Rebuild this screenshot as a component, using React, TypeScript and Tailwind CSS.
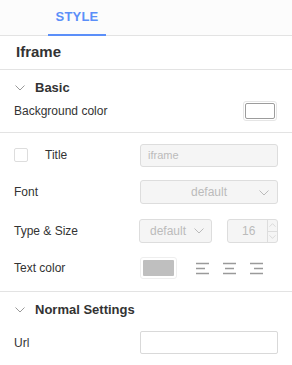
import React from "react";

function Chevron({ className = "" }: { className?: string }) {
  return (
    <svg width="10" height="6" viewBox="0 0 10 6" className={className}>
      <path d="M0.5 0.5 L5 5 L9.5 0.5" fill="none" stroke="currentColor" strokeWidth="1" />
    </svg>
  );
}

function AlignIcon({ kind }: { kind: "left" | "center" | "right" }) {
  const mid = kind === "left" ? "M1 6.5h9" : kind === "center" ? "M3 6.5h9" : "M5 6.5h9";
  return (
    <svg width="15" height="13" viewBox="0 0 15 13" className="text-[#9a9a9a]">
      <path d={`M1 1.5h13 ${mid} M1 11.5h13`} stroke="currentColor" strokeWidth="1.4" fill="none" />
    </svg>
  );
}

function Row({ label, children, className = "" }: { label: React.ReactNode; children: React.ReactNode; className?: string }) {
  return (
    <div className={`flex items-center justify-between ${className}`}>
      <div className="text-[12px] text-[#333]">{label}</div>
      {children}
    </div>
  );
}

export default function App() {
  return (
    <div className="w-[292px] h-[365px] bg-white overflow-hidden font-['Liberation_Sans',Arial,sans-serif] text-[#333]">
      {/* tabs */}
      <div className="h-[36px] bg-[#fcfcfc] border-b border-[#e3e3e3] relative">
        <div className="absolute left-[48px] w-[58px] top-0 h-[36px] flex items-center justify-center border-b-2 border-[#5b8ff9]">
          <span className="text-[13px] font-bold text-[#5b8ff9] tracking-[0.2px]">STYLE</span>
        </div>
      </div>

      <div className="h-[34px] border-b border-[#e3e3e3] flex items-center px-[16px]">
        <span className="text-[15px] font-bold text-[#333]">Iframe</span>
      </div>

      {/* Basic */}
      <div className="border-b border-[#e3e3e3] px-[14px] pt-[10px] pb-[10px]">
        <div className="flex items-center h-[16px]">
          <Chevron className="text-[#999] ml-[1px]" />
          <span className="ml-[10px] text-[13px] font-bold text-[#333]">Basic</span>
        </div>
        <Row label="Background color" className="mt-[3px] h-[23px]">
          <div className="w-[34px] h-[20px] rounded-[3px] border border-[#e5e5e5] p-[1px] mr-[1px]">
            <div className="w-full h-full border border-[#9c9c9c] rounded-[2px] bg-white" />
          </div>
        </Row>
      </div>

      <div className="px-[14px] pt-[10px]">
        <div className="flex items-center justify-between h-[24px]">
          <div className="flex items-center">
            <div className="w-[14px] h-[14px] border border-[#ddd] rounded-[2px] bg-white" />
            <span className="ml-[17px] text-[12px] text-[#333]">Title</span>
          </div>
          <div className="w-[138px] h-[23px] border border-[#ddd] rounded-[3px] bg-[#f5f5f5] flex items-center px-[7px] text-[11px] text-[#bbb]">
            iframe
          </div>
        </div>

        <Row label="Font" className="mt-[13px] h-[24px]">
          <div className="w-[138px] h-[24px] border border-[#ddd] rounded-[3px] bg-[#f5f5f5] relative flex items-center justify-center text-[12px] text-[#bbb]">
            default
            <Chevron className="absolute right-[8px] top-[9px] text-[#bbb]" />
          </div>
        </Row>

        <Row label="Type & Size" className="mt-[15px] h-[24px]">
          <div className="flex items-center">
            <div className="w-[73px] h-[24px] border border-[#ddd] rounded-[3px] bg-[#f5f5f5] relative flex items-center pl-[10px] text-[12px] text-[#bbb]">
              default
              <Chevron className="absolute right-[7px] top-[8px] text-[#bbb]" />
            </div>
            <div className="ml-[15px] w-[51px] h-[24px] border border-[#ddd] rounded-[3px] bg-[#f5f5f5] relative flex items-center text-[12px] text-[#bbb]">
              <span className="ml-[14px]">16</span>
              <div className="absolute right-0 top-0 w-[10px] h-full border-l border-[#ddd] flex flex-col">
                <div className="flex-1 flex items-center justify-center border-b border-[#ddd]">
                  <Chevron className="w-[7px] h-[4px] rotate-180 text-[#ccc]" />
                </div>
                <div className="flex-1 flex items-center justify-center">
                  <Chevron className="w-[7px] h-[4px] text-[#ccc]" />
                </div>
              </div>
            </div>
          </div>
        </Row>

        <Row label="Text color" className="mt-[14px] h-[22px]">
          <div className="w-[138px] flex items-center">
            <div className="w-[37px] h-[22px] border border-[#eee] rounded-[3px] p-[2px]">
              <div className="w-full h-full bg-[#bfbfbf] rounded-[1px]" />
            </div>
            <div className="ml-[18px] flex items-center gap-[12px]">
              <AlignIcon kind="left" />
              <AlignIcon kind="center" />
              <AlignIcon kind="right" />
            </div>
          </div>
        </Row>
      </div>

      {/* Normal Settings */}
      <div className="mt-[12px] border-t border-[#e3e3e3] px-[14px] pt-[10px]">
        <div className="flex items-center h-[16px]">
          <Chevron className="text-[#999] ml-[1px]" />
          <span className="ml-[10px] text-[13px] font-bold text-[#333]">Normal Settings</span>
        </div>
        <Row label="Url" className="mt-[13px] h-[23px]">
          <div className="w-[138px] h-[23px] border border-[#d9d9d9] rounded-[2px] bg-white" />
        </Row>
      </div>
    </div>
  );
}
